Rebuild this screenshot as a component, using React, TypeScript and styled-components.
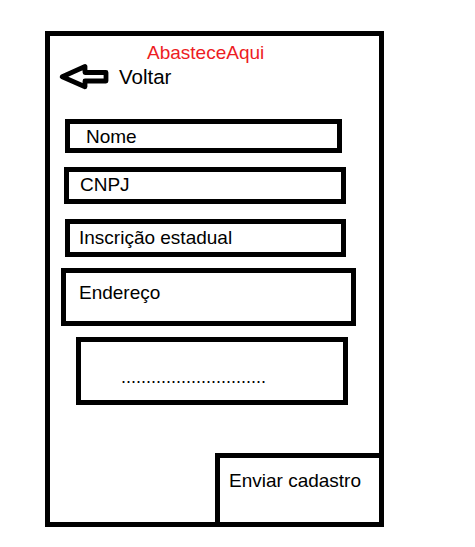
import React from 'react';
import styled, {createGlobalStyle} from 'styled-components';

const GlobalStyle = createGlobalStyle`
  html, body {
    margin: 0;
    padding: 0;
    background: #fff;
  }
  body {
    font-family: "Liberation Sans", Arial, sans-serif;
    color: #000;
  }
`;

const Frame = styled.div`
  box-sizing: border-box;
  display: flex;
  flex-direction: column;
  width: 339px;
  height: 496px;
  margin: 31px 0 0 45px;
  border: 5px solid #000;
  background: #fff;
`;

const Title = styled.h1`
  margin: 7px 0 0 97px;
  font-size: 19px;
  line-height: 20px;
  font-weight: normal;
  color: #ed1c24;
`;

const BackRow = styled.div`
  display: flex;
  align-items: center;
  gap: 8px;
  height: 28px;
  margin-left: 7px;
  cursor: pointer;
`;

const BackLabel = styled.span`
  font-size: 20.5px;
  line-height: 22px;
`;

type FieldProps = {
  $top: number;
  $left: number;
  $width: number;
  $height: number;
  $padTop: number;
  $padLeft: number;
};

const Field = styled.div<FieldProps>`
  box-sizing: border-box;
  flex-shrink: 0;
  width: ${p => p.$width}px;
  height: ${p => p.$height}px;
  margin: ${p => p.$top}px 0 0 ${p => p.$left}px;
  padding: ${p => p.$padTop}px 0 0 ${p => p.$padLeft}px;
  border: 5px solid #000;
  font-size: 19px;
  line-height: 20px;
  white-space: nowrap;
`;

const Dots = styled.span`
  font-size: 18px;
`;

const Submit = styled.button`
  box-sizing: border-box;
  flex-shrink: 0;
  align-self: flex-end;
  width: 169px;
  height: 74px;
  margin: auto -5px -5px 0;
  padding: 13.4px 0 30.6px 9px;
  border: 5px solid #000;
  background: #fff;
  color: #000;
  font-family: inherit;
  font-size: 19px;
  line-height: 20px;
  text-align: left;
  cursor: pointer;
`;

const BackArrow = () => (
  <svg width="54" height="28" viewBox="0 0 54 28">
    <polygon
      points="5.25,13.7 28,3.5 28,9.5 49,9.5 49,18 28,18 28,23.8"
      fill="none"
      stroke="#000"
      strokeWidth="4.8"
      strokeLinejoin="round"
    />
  </svg>
);

const fields = [
  {label: 'Nome', top: 28, left: 15, width: 277, height: 34, padTop: 3.4, padLeft: 16},
  {label: 'CNPJ', top: 14, left: 14, width: 282, height: 37, padTop: 3.1, padLeft: 11},
  {label: 'Inscrição estadual', top: 15, left: 15, width: 281, height: 38, padTop: 4.4, padLeft: 9},
  {label: 'Endereço', top: 11, left: 11, width: 295, height: 58, padTop: 10.4, padLeft: 13},
];

export default function App() {
  return (
    <>
      <GlobalStyle />
      <Frame>
        <Title>AbasteceAqui</Title>
        <BackRow>
          <BackArrow />
          <BackLabel>Voltar</BackLabel>
        </BackRow>
        {fields.map(f => (
          <Field
            key={f.label}
            $top={f.top}
            $left={f.left}
            $width={f.width}
            $height={f.height}
            $padTop={f.padTop}
            $padLeft={f.padLeft}
          >
            {f.label}
          </Field>
        ))}
        <Field $top={11} $left={26} $width={272} $height={68} $padTop={25} $padLeft={40}>
          <Dots>{'.'.repeat(29)}</Dots>
        </Field>
        <Submit>Enviar cadastro</Submit>
      </Frame>
    </>
  );
}
